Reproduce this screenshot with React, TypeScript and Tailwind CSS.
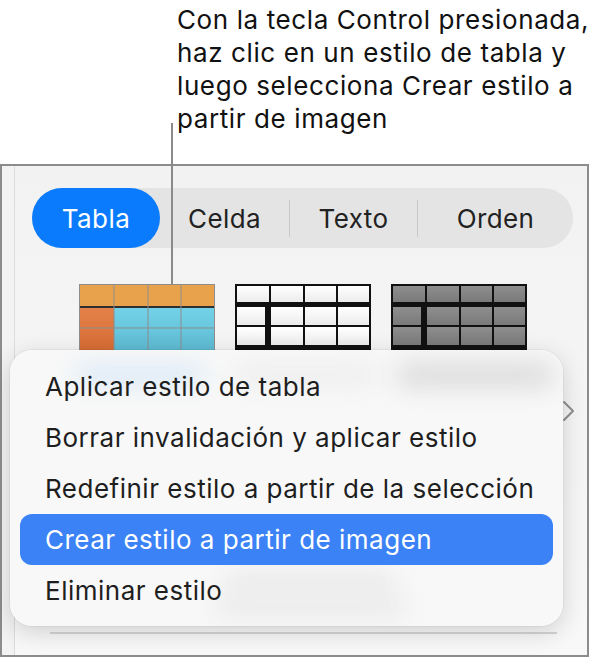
const font = { fontFamily: 'Inter, "Noto Sans", sans-serif' };

const menuItems = [
  'Aplicar estilo de tabla',
  'Borrar invalidación y aplicar estilo',
  'Redefinir estilo a partir de la selección',
  'Crear estilo a partir de imagen',
  'Eliminar estilo',
];

const cols = [0, 34, 68, 101, 134];

const OrangeThumb = () => (
  <svg width="136" height="66" viewBox="0 0 136 66">
    <defs>
      <linearGradient id="cyan" x1="0" y1="0" x2="0" y2="1">
        <stop offset="0" stopColor="#74d2e8" />
        <stop offset="1" stopColor="#5cbad2" />
      </linearGradient>
      <linearGradient id="org" x1="0" y1="0" x2="0" y2="1">
        <stop offset="0" stopColor="#e4824a" />
        <stop offset="1" stopColor="#d66c35" />
      </linearGradient>
    </defs>
    <rect x="1" y="1" width="134" height="21" fill="#e8a24c" />
    <rect x="1" y="24" width="34" height="42" fill="url(#org)" />
    <rect x="35" y="24" width="100" height="42" fill="url(#cyan)" />
    <rect x="1" y="22" width="134" height="2" fill="#2f2f2f" />
    {cols.slice(1, 4).map((c) => (
      <line key={c} x1={c + 1} y1="1" x2={c + 1} y2="66" stroke="#8d8d8d" strokeWidth="1" />
    ))}
    <line x1="1" y1="44" x2="135" y2="44" stroke="#8d8d8d" strokeWidth="1" />
    <rect x="0.5" y="0.5" width="135" height="70" fill="none" stroke="#8d8d8d" strokeWidth="1" />
  </svg>
);

const LineThumb = ({ cell }: { cell: string }) => (
  <svg width="136" height="66" viewBox="0 0 136 66">
    <defs>
      <linearGradient id={`g${cell}`} x1="0" y1="0" x2="0" y2="1">
        <stop offset="0" stopColor={cell === 'w' ? '#ffffff' : '#8e8e8e'} />
        <stop offset="1" stopColor={cell === 'w' ? '#ececec' : '#7a7a7a'} />
      </linearGradient>
    </defs>
    <rect x="0" y="0" width="136" height="66" fill="#111" />
    {[
      [2, 34],
      [36, 68],
      [70, 101],
      [103, 134],
    ].map(([a, b]) => (
      <rect key={a} x={a} y="2" width={b - a} height="16" fill={`url(#g${cell})`} />
    ))}
    {[
      [2, 30],
      [36, 68],
      [70, 101],
      [103, 134],
    ].map(([a, b]) =>
      [23, 43].map((y) => (
        <rect key={`${a}-${y}`} x={a} y={y} width={b - a} height="18" fill={`url(#g${cell})`} />
      ))
    )}
  </svg>
);

export default function App() {
  return (
    <div className="relative w-[591px] h-[657px] bg-white overflow-hidden" style={font}>
      <div className="pl-[177px] pt-[3px] text-[26px] leading-[33px] text-[#111] tracking-[0.6px]">
        Con la tecla Control presionada,
        <br />
        haz clic en un estilo de tabla y
        <br />
        luego selecciona Crear estilo a
        <br />
        partir de imagen
      </div>

      {/* leader line */}
      <div className="absolute left-[171px] top-[123px] w-[2px] h-[161px] bg-[#8a8a8a] z-10" />

      <div className="absolute left-0 top-[164px] w-[589px] h-[493px] border-2 border-[#8c8c8c] bg-[#f6f6f6] flex">
        <div className="w-[13px] border-r border-[#dcdcdc] bg-[#f3f3f3]" />
        <div className="flex-1 flex flex-col bg-gradient-to-b from-[#f2f2f2] to-[#f8f8f8]">
          <div className="ml-[17px] mt-[22px] w-[541px] h-[60px] rounded-full bg-[#e4e4e4] flex items-center text-[26px] tracking-[0.4px] text-[#222]">
            <div className="w-[128px] h-[60px] rounded-full bg-[#0a7bfc] text-white flex items-center justify-center">
              Tabla
            </div>
            <div className="w-[129px] flex items-center justify-center">Celda</div>
            <div className="w-px h-[37px] bg-[#c9c9c9]" />
            <div className="w-[127px] flex items-center justify-center">Texto</div>
            <div className="w-px h-[37px] bg-[#c9c9c9]" />
            <div className="flex-1 flex items-center justify-center">Orden</div>
          </div>

          <div className="ml-[64px] mt-[36px] flex gap-[20px]">
            <OrangeThumb />
            <LineThumb cell="w" />
            <LineThumb cell="g" />
          </div>

          <div className="mt-[50px] flex justify-end pr-[12px]">
            <svg width="14" height="22" viewBox="0 0 14 22" fill="none">
              <path d="M3 2l9 9-9 9" stroke="#8e8e8e" strokeWidth="2" strokeLinecap="round" strokeLinejoin="round" />
            </svg>
          </div>

          <div className="mt-auto mb-[21px] ml-[35px] w-[507px] h-[2px] bg-[#d4d4d4]" />
        </div>
      </div>

      {/* context menu */}
      <div className="absolute left-[10px] top-[350px] w-[553px] h-[276px] rounded-[22px] bg-[#f8f8f8]/95 shadow-[0_6px_24px_rgba(0,0,0,0.16),0_0_0_1px_rgba(0,0,0,0.04)] overflow-hidden z-20">
        <div className="absolute left-[65px] top-[16px] w-[130px] h-[18px] rounded-full bg-[#d6e7f7] blur-md" />
        <div className="absolute left-[225px] top-[16px] w-[140px] h-[18px] rounded-full bg-[#ebebeb] blur-md" />
        <div className="absolute left-[385px] top-[12px] w-[160px] h-[26px] rounded-full bg-[#dcdcdc] blur-md" />
        <div className="absolute left-[215px] top-[225px] w-[170px] h-[14px] rounded-full bg-[#e4e4e4] blur-md" />
        <div className="absolute left-[205px] top-[250px] w-[190px] h-[14px] rounded-full bg-[#e4e4e4] blur-md" />
        <div className="relative px-[10px] pt-[11px] flex flex-col text-[26px] tracking-[0.5px]">
          {menuItems.map((item, i) => (
            <div
              key={item}
              className={
                i === 3
                  ? 'h-[51px] pl-[25px] flex items-center rounded-[12px] bg-[#3b82f7] text-white'
                  : 'h-[51px] pl-[25px] flex items-center text-[#1e1e1e]'
              }
            >
              {item}
            </div>
          ))}
        </div>
      </div>
    </div>
  );
}
